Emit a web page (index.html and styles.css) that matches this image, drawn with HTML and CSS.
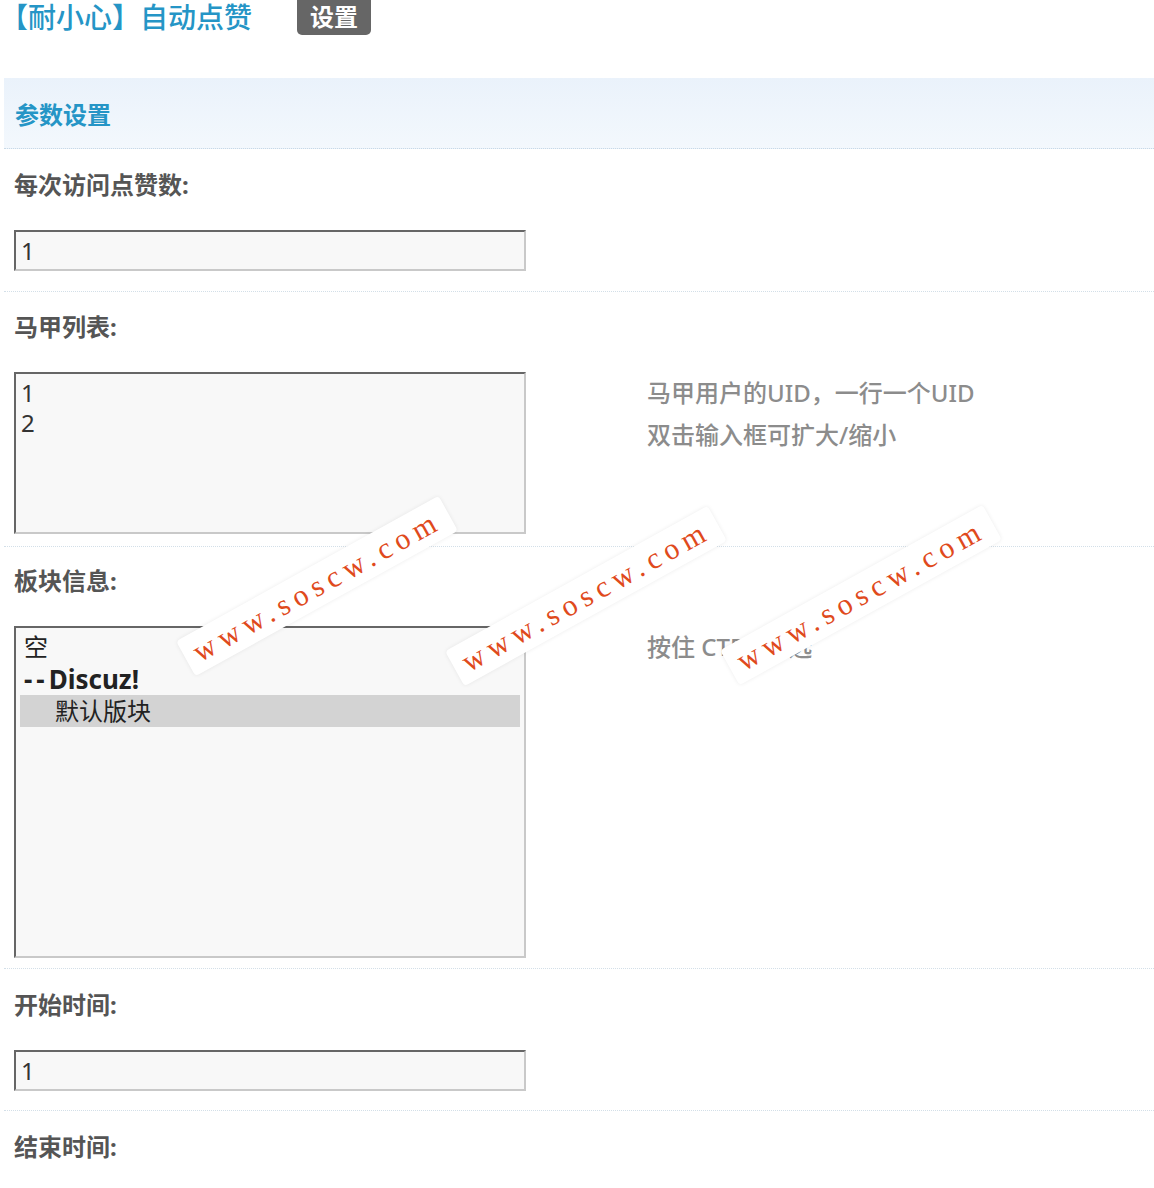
FILE: index.html
```html
<!DOCTYPE html>
<html lang="zh-CN">
<head>
<meta charset="utf-8">
<title>【耐小心】自动点赞 - 设置</title>
<link rel="stylesheet" href="styles.css">
</head>
<body>
<div class="topbar">
  <h1 class="title">【耐小心】自动点赞</h1>
  <span class="tab-btn">设置</span>
</div>

<div class="main">
  <div class="section-head">参数设置</div>

  <div class="row row-first">
    <div class="label">每次访问点赞数:</div>
    <div class="field">
      <input class="txt" type="text" value="1">
    </div>
  </div>

  <div class="row row-area">
    <div class="label">马甲列表:</div>
    <div class="field">
      <textarea class="txt area">1
2</textarea>
      <div class="tip">马甲用户的UID，一行一个UID<br>双击输入框可扩大/缩小</div>
    </div>
  </div>

  <div class="row row-list">
    <div class="label">板块信息:</div>
    <div class="field">
      <div class="listbox" role="listbox" aria-multiselectable="true">
        <div class="opt" role="option">空</div>
        <div class="opt grp" role="option"><span class="dash">--</span>Discuz!</div>
        <div class="opt sub sel" role="option" aria-selected="true">默认版块</div>
      </div>
      <div class="tip">按住 CTRL 多选</div>
    </div>
  </div>

  <div class="row row-time">
    <div class="label">开始时间:</div>
    <div class="field">
      <input class="txt" type="text" value="1">
    </div>
  </div>

  <div class="row row-last">
    <div class="label">结束时间:</div>
  </div>
</div>

<div class="wm wm1">www.soscw.com</div>
<div class="wm wm2">www.soscw.com</div>
<div class="wm wm3">www.soscw.com</div>
</body>
</html>
```

FILE: styles.css
```css
* { box-sizing: border-box; }

html, body {
  margin: 0;
  padding: 0;
  background: #fff;
}

body {
  position: relative;
  width: 1154px;
  min-height: 1188px;
  overflow: hidden;
  font-family: "Noto Sans", "Noto Sans CJK SC", sans-serif;
  color: #333;
}

.topbar {
  display: flex;
  align-items: flex-start;
  height: 36px;
}

.title {
  margin: 0;
  padding-top: 1px;
  font-size: 28px;
  line-height: 32px;
  font-weight: 500;
  color: #2595c6;
}

.tab-btn {
  margin-left: 45px;
  height: 35px;
  padding: 0 13px;
  background: #666;
  color: #fff;
  font-size: 24px;
  font-weight: 700;
  line-height: 33px;
  border-radius: 0 0 5px 5px;
}

.main {
  margin: 42px 0 0 4px;
}

.section-head {
  height: 71px;
  display: flex;
  align-items: center;
  padding-left: 11px;
  background: linear-gradient(#eaf2fb, #f3f8fd);
  border-bottom: 1px dotted #c8d9e6;
  color: #2595c6;
  font-size: 24px;
  font-weight: 700;
}

.row {
  padding: 20px 0 20px 10px;
  border-bottom: 1px dotted #d3dfe8;
}

.row-first { padding-top: 21px; }
.row-area { padding-bottom: 12px; }
.row-list { padding-top: 19px; padding-bottom: 10px; }
.row-time { padding-top: 21px; padding-bottom: 19px; }
.row-last { padding-top: 21px; border-bottom: 0; }

.label {
  font-size: 24px;
  line-height: 30px;
  font-weight: 700;
  color: #555;
}

.field {
  display: flex;
  align-items: flex-start;
  margin-top: 30px;
}

.txt {
  display: block;
  width: 512px;
  height: 41px;
  margin: 0;
  padding: 0 5px;
  border: 2px solid;
  border-color: #666 #c9c9c9 #c9c9c9 #666;
  background: #f8f8f8;
  font-family: "Noto Sans", "Noto Sans CJK SC", sans-serif;
  font-size: 24px;
  color: #333;
  outline: none;
}

.area {
  height: 162px;
  padding: 4px 5px;
  line-height: 30px;
  resize: none;
  overflow: hidden;
}

.listbox {
  width: 512px;
  height: 332px;
  padding: 3px 4px;
  border: 2px solid;
  border-color: #666 #c9c9c9 #c9c9c9 #666;
  background: #f8f8f8;
  font-size: 24px;
  color: #222;
}

.opt {
  height: 32px;
  line-height: 32px;
  padding-left: 4px;
  white-space: nowrap;
}

.grp { font-weight: 700; font-size: 26px; }
.dash { letter-spacing: 4px; }
.sub { padding-left: 35px; }
.sel { background: #d3d3d3; }

.tip {
  margin-left: 121px;
  font-size: 24px;
  line-height: 42px;
  font-weight: 500;
  color: #8c8c8c;
}

.wm {
  position: absolute;
  width: 300px;
  height: 40px;
  line-height: 40px;
  text-align: center;
  white-space: nowrap;
  transform: rotate(-29deg);
  transform-origin: center;
  background: #fff;
  border-radius: 4px;
  box-shadow: 0 0 4px rgba(0, 0, 0, 0.08);
  font-family: "Liberation Serif", serif;
  font-size: 30px;
  letter-spacing: 6px;
  color: #e04a1c;
}

.wm1 { left: 167px; top: 566px; }
.wm2 { left: 436px; top: 576px; }
.wm3 { left: 711px; top: 575px; }
```
